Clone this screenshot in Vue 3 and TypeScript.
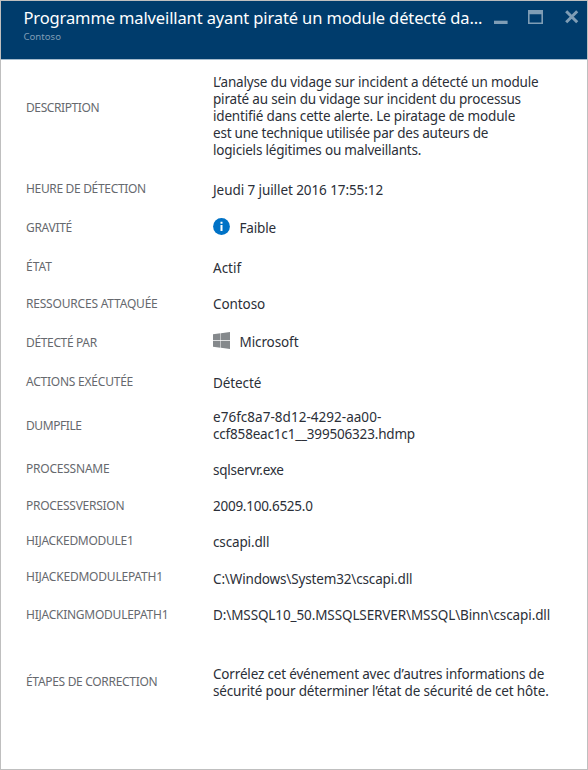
<script setup lang="ts">
interface Line {
  text: string
  tracking: number
}

interface Row {
  label: string
  tracking: number
  labelTop: number
  height: number
  icon?: 'info' | 'windows'
  lines: Line[]
}

const rows: Row[] = [
  {
    label: 'DESCRIPTION', tracking: -0.4, labelTop: 28, height: 108,
    lines: [
      { text: 'L’analyse du vidage sur incident a détecté un module', tracking: -0.165 },
      { text: 'piraté au sein du vidage sur incident du processus', tracking: -0.19 },
      { text: 'identifié dans cette alerte. Le piratage de module', tracking: -0.18 },
      { text: 'est une technique utilisée par des auteurs de', tracking: -0.22 },
      { text: 'logiciels légitimes ou malveillants.', tracking: -0.2 },
    ],
  },
  { label: 'HEURE DE DÉTECTION', tracking: -0.33, labelTop: 1, height: 38, lines: [{ text: 'Jeudi 7 juillet 2016 17:55:12', tracking: -0.08 }] },
  { label: 'GRAVITÉ', tracking: -0.3, labelTop: 2, height: 40, icon: 'info', lines: [{ text: 'Faible', tracking: -0.16 }] },
  { label: 'ÉTAT', tracking: 0, labelTop: 1, height: 36, lines: [{ text: 'Actif', tracking: 0 }] },
  { label: 'RESSOURCES ATTAQUÉE', tracking: -0.2, labelTop: 2, height: 38, lines: [{ text: 'Contoso', tracking: -0.08 }] },
  { label: 'DÉTECTÉ PAR', tracking: -0.35, labelTop: 3, height: 41, icon: 'windows', lines: [{ text: 'Microsoft', tracking: -0.1 }] },
  { label: 'ACTIONS EXÉCUTÉE', tracking: -0.23, labelTop: 1, height: 34, lines: [{ text: 'Détecté', tracking: -0.1 }] },
  {
    label: 'DUMPFILE', tracking: -0.42, labelTop: 11, height: 53,
    lines: [
      { text: 'e76fc8a7-8d12-4292-aa00-', tracking: 0.03 },
      { text: 'ccf858eac1c1__399506323.hdmp', tracking: -0.18 },
    ],
  },
  { label: 'PROCESSNAME', tracking: -0.22, labelTop: 1, height: 36, lines: [{ text: 'sqlservr.exe', tracking: -0.24 }] },
  { label: 'PROCESSVERSION', tracking: -0.27, labelTop: 2, height: 36, lines: [{ text: '2009.100.6525.0', tracking: -0.26 }] },
  { label: 'HIJACKEDMODULE1', tracking: -0.28, labelTop: 1, height: 37, lines: [{ text: 'cscapi.dll', tracking: -0.14 }] },
  { label: 'HIJACKEDMODULEPATH1', tracking: -0.21, labelTop: 0, height: 36, lines: [{ text: 'C:\\Windows\\System32\\cscapi.dll', tracking: -0.15 }] },
  { label: 'HIJACKINGMODULEPATH1', tracking: -0.25, labelTop: 2, height: 59, lines: [{ text: 'D:\\MSSQL10_50.MSSQLSERVER\\MSSQL\\Binn\\cscapi.dll', tracking: -0.105 }] },
  {
    label: 'ÉTAPES DE CORRECTION', tracking: -0.31, labelTop: 10, height: 60,
    lines: [
      { text: 'Corrélez cet événement avec d’autres informations de', tracking: -0.175 },
      { text: 'sécurité pour déterminer l’état de sécurité de cet hôte.', tracking: -0.155 },
    ],
  },
]
</script>

<template>
  <section class="blade">
    <header class="header">
      <div class="titles">
        <h1 class="title">Programme malveillant ayant piraté un module détecté da...</h1>
        <div class="subtitle">Contoso</div>
      </div>
      <div class="controls">
        <svg class="control" width="14" height="14" viewBox="0 0 14 14"><path d="M0 10.7h13.6v3.3H0z" /></svg>
        <svg class="control" width="16" height="14" viewBox="0 0 16 14"><path fill-rule="evenodd" d="M0 0h15v14H0zM1.6 4.2v8.2h11.8v-8.2z" /></svg>
        <svg class="control" width="14" height="14" viewBox="0 0 14 14"><path class="cross" d="M1.2 1.2l11 11M12.2 1.2l-11 11" /></svg>
      </div>
    </header>
    <dl class="details">
      <div v-for="row in rows" :key="row.label" class="row" :style="{ height: row.height + 'px' }">
        <dt class="label" :style="{ letterSpacing: row.tracking + 'px', paddingTop: row.labelTop + 'px' }">{{ row.label }}</dt>
        <dd class="value">
          <svg v-if="row.icon === 'info'" class="icon" width="17" height="17" viewBox="0 0 17 17">
            <circle cx="8.5" cy="8.5" r="8.4" fill="#0072c6" />
            <path d="M7.5 3.8h2v2h-2zM7.5 7h2v6h-2z" fill="#fff" />
          </svg>
          <svg v-else-if="row.icon === 'windows'" class="icon" width="17" height="17" viewBox="0 0 17 17">
            <path d="M0 2.3l7.5-1V8.1H0zM8 1.2L17 0v8.1H8zM0 8.8h7.5v6.9L0 14.7zM8 8.8h9V17l-9-1.2z" fill="#85898c" />
          </svg>
          <div>
            <div v-for="line in row.lines" :key="line.text" class="line" :style="{ letterSpacing: line.tracking + 'px' }">{{ line.text }}</div>
          </div>
        </dd>
      </div>
    </dl>
  </section>
</template>

<style>
body {
  margin: 0;
}
</style>

<style scoped>
.blade {
  box-sizing: border-box;
  width: 588px;
  height: 770px;
  border: 1px solid #bfbfbf;
  background: #fff;
  font-family: "Noto Sans", "Open Sans", sans-serif;
  overflow: hidden;
}
.header {
  display: flex;
  box-sizing: border-box;
  height: 59px;
  padding-left: 22px;
  background: #003c6c;
  border-bottom: 1px solid #a6bccd;
}
.titles {
  width: 471px;
}
.title {
  margin: 5px 0 0 0.5px;
  font-size: 16.5px;
  font-weight: 400;
  line-height: 24px;
  letter-spacing: -0.125px;
  white-space: nowrap;
  color: #fff;
}
.subtitle {
  padding-left: 0.5px;
  font-size: 9.6px;
  line-height: 13px;
  color: #7f9db5;
}
.controls {
  display: flex;
  gap: 20.5px;
  padding-top: 9px;
}
.control {
  display: block;
  flex: none;
  fill: #7f9db5;
}
.control:nth-child(2) {
  margin-left: -0.5px;
}
.cross {
  fill: none;
  stroke: #7f9db5;
  stroke-width: 3;
}
.details {
  margin: 0;
  padding: 11px 0 0 25px;
}
.row {
  display: grid;
  grid-template-columns: 187px 1fr;
  align-items: start;
}
.label {
  font-size: 12px;
  line-height: 17px;
  color: #66696e;
  white-space: nowrap;
}
.value {
  display: flex;
  margin: 0;
  padding-top: 3px;
  font-size: 13.5px;
  line-height: 17px;
  color: #2b2f38;
  white-space: nowrap;
}
.icon {
  display: block;
  flex: none;
  margin: -2px 10px 0 -0.5px;
}
</style>
